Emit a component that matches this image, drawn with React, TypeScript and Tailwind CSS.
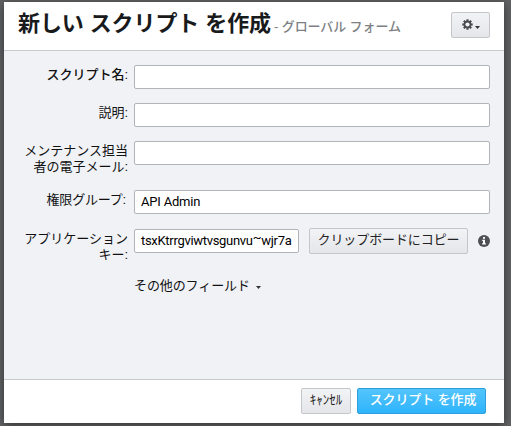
import type { ReactNode } from 'react';

const font = "font-['Liberation_Sans','Noto_Sans_CJK_JP',sans-serif]";
const field = 'h-6 border border-[#b1b4b9] rounded-[2px] bg-white text-[13px] text-black outline-none';
const greyButton =
  'flex items-center justify-center h-[26px] shrink-0 whitespace-nowrap rounded-[2px] border border-[#c5c6ca] bg-linear-to-b from-[#f2f3f5] to-[#e5e6e9] text-[#222]';

function Caret() {
  return (
    <svg width="5" height="3" viewBox="0 0 5 3" className="shrink-0 fill-[#333]">
      <path d="M0 0h5L2.5 3z" />
    </svg>
  );
}

function Gear() {
  return (
    <svg width="11" height="11" viewBox="-5.5 -5.5 11 11" className="shrink-0">
      <g fill="#494a4c">
        {[0, 45, 90, 135].map((a) => (
          <rect key={a} x="-1.1" y="-5.2" width="2.2" height="10.4" transform={`rotate(${a})`} />
        ))}
        <circle r="3.8" />
      </g>
      <circle r="2.1" fill="#f0f1f3" />
    </svg>
  );
}

function Info() {
  return (
    <svg width="12" height="12" viewBox="0 0 12 12" className="shrink-0">
      <circle cx="6" cy="6" r="6" fill="#4f5054" />
      <path d="M5 2h2v1.7H5zM4.2 4.7H7v3.6h.9v1.3H4.1V8.3H5V6h-.8z" fill="#fff" />
    </svg>
  );
}

function Row({ label, className, children }: { label: ReactNode; className: string; children: ReactNode }) {
  return (
    <div className={`flex items-start shrink-0 ${className}`}>
      <div className="w-[130px] pr-[6px] pt-[2px] shrink-0 text-right whitespace-nowrap text-[13px] leading-4 text-[#111]">
        {label}
      </div>
      {children}
    </div>
  );
}

export default function App() {
  return (
    <div className={`flex h-[426px] w-[511px] overflow-hidden bg-[#626365] pl-1 pt-[2px] ${font}`}>
      <div className="flex h-[421px] w-[500px] flex-col bg-[#f0f2f6] shadow-[0_2px_10px_rgba(0,0,0,0.5)]">
        <header className="flex h-[49px] shrink-0 justify-between border-b border-[#c8cacd] bg-white pl-[14px] pr-[14px]">
          <h1 className="flex h-[43px] items-baseline whitespace-nowrap text-[22px] font-medium leading-[43px] text-[#181a1c]">
            <span className="w-[256px] font-bold tracking-[-0.1px]">新しい スクリプト を作成</span>
            <span className="text-[13px] font-medium tracking-[-0.1px] text-[#7d7f84]">- グローバル フォーム</span>
          </h1>
          <button className={`${greyButton} mt-[10px] w-[39px] gap-[2px] pb-[2px]`}>
            <Gear />
            <span className="pt-[6px]"><Caret /></span>
          </button>
        </header>
        <main className="flex h-[329px] shrink-0 flex-col border-b border-[#c9cacc] pt-[14px]">
          <Row className="h-[38px]" label={<span className="font-medium">スクリプト名:</span>}>
            <input className={`${field} w-[356px]`} />
          </Row>
          <Row className="h-[38px]" label="説明:">
            <input className={`${field} w-[356px]`} />
          </Row>
          <Row className="h-[49px]" label={<>メンテナンス担当<br />者の電子メール:</>}>
            <input className={`${field} w-[356px]`} />
          </Row>
          <Row className="h-[39px]" label={<span className="mr-[2px] tracking-[-0.2px]">権限グループ:</span>}>
            <div className={`${field} w-[356px] pl-[6px] leading-[22px] tracking-[-0.2px] font-['Roboto',sans-serif]`}>API Admin</div>
          </Row>
          <Row className="h-[47px]" label={<>アプリケーション<br />キー:</>}>
            <div className={`${field} w-[165px] overflow-hidden whitespace-nowrap pl-[6px] leading-[22px] tracking-[-0.3px] font-['Roboto',sans-serif]`}>
              tsxKtrrgviwtvsgunvu<span className="inline-block -translate-y-[3px]">~</span>wjr7a
            </div>
            <button className={`${greyButton} -mt-px ml-[10px] w-[159px] pb-[2px] text-[13px] tracking-[-0.1px]`}>クリップボードにコピー</button>
            <span className="ml-[10px] mt-[6px]"><Info /></span>
          </Row>
          <div className="ml-[130px] flex h-5 items-center gap-[6px] text-[13px] tracking-[-0.1px] text-[#111]">
            その他のフィールド
            <span className="pt-[2px]"><Caret /></span>
          </div>
        </main>
        <footer className="flex h-[43px] shrink-0 justify-end gap-[6px] bg-white pr-[18px] pt-[8px]">
          <button className={`${greyButton} w-[50px] pb-[2px] text-[13px]`}>ｷｬﾝｾﾙ</button>
          <button className="flex h-[26px] w-[129px] items-center justify-center whitespace-nowrap rounded-[2px] border border-[#2c9fdc] bg-linear-to-b from-[#52c4fb] to-[#2db4fc] pb-[2px] pl-[3px] text-[13px] font-medium tracking-[-0.1px] text-white">スクリプト を作成</button>
        </footer>
      </div>
    </div>
  );
}
